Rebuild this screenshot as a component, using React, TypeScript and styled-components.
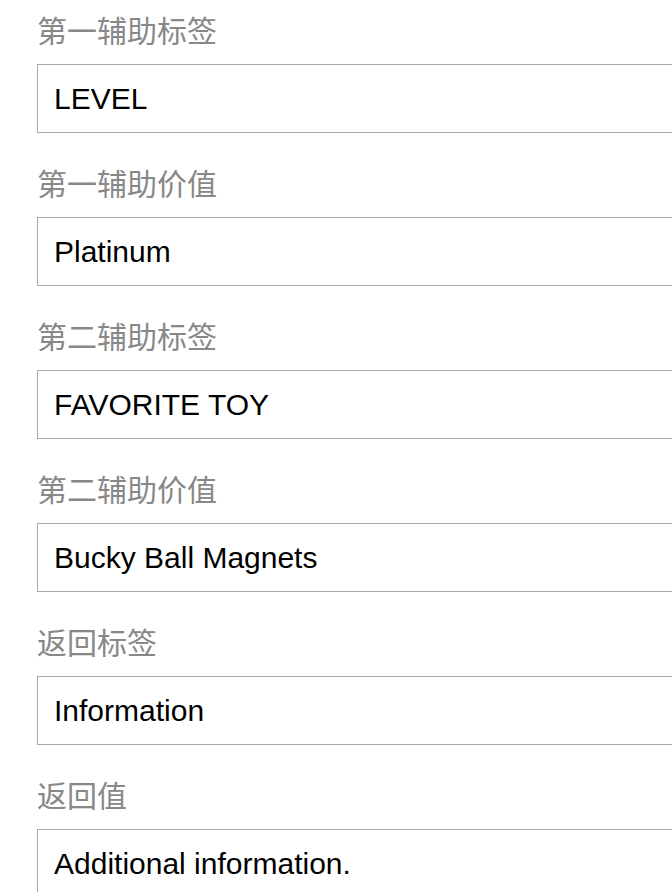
import React from "react";
import styled, { createGlobalStyle } from "styled-components";

type Field = {
  label: string;
  value: string;
};

const fields: Field[] = [
  { label: "第一辅助标签", value: "LEVEL" },
  { label: "第一辅助价值", value: "Platinum" },
  { label: "第二辅助标签", value: "FAVORITE TOY" },
  { label: "第二辅助价值", value: "Bucky Ball Magnets" },
  { label: "返回标签", value: "Information" },
  { label: "返回值", value: "Additional information." },
];

export default function App() {
  return (
    <>
      <GlobalStyle />
      <Form>
        {fields.map((f) => (
          <FieldGroup key={f.label}>
            <Label>{f.label}</Label>
            <Input type="text" defaultValue={f.value} readOnly />
          </FieldGroup>
        ))}
      </Form>
    </>
  );
}

// =================== Styled Components ===================

const GlobalStyle = createGlobalStyle`
  html, body {
    margin: 0;
    padding: 0;
    background: #ffffff;
    overflow: hidden;
  }
  body {
    font-family: "Liberation Sans", Arial, "Noto Sans CJK SC", sans-serif;
  }
`;

const Form = styled.div`
  display: flex;
  flex-direction: column;
  padding: 9px 0 0 37px;
`;

const FieldGroup = styled.div`
  display: flex;
  flex-direction: column;
  gap: 15px;
  margin-bottom: 29px;
`;

const Label = styled.label`
  display: block;
  height: 40px;
  line-height: 40px;
  font-family: "Noto Sans CJK SC", "Liberation Sans", sans-serif;
  font-size: 30px;
  color: #888888;
`;

const Input = styled.input`
  box-sizing: border-box;
  width: 720px;
  height: 69px;
  padding: 0 16px;
  border: 1px solid #a9a9a9;
  border-radius: 0;
  font-family: "Liberation Sans", Arial, sans-serif;
  font-size: 30px;
  color: #000000;
  background: #ffffff;
  outline: none;
`;
